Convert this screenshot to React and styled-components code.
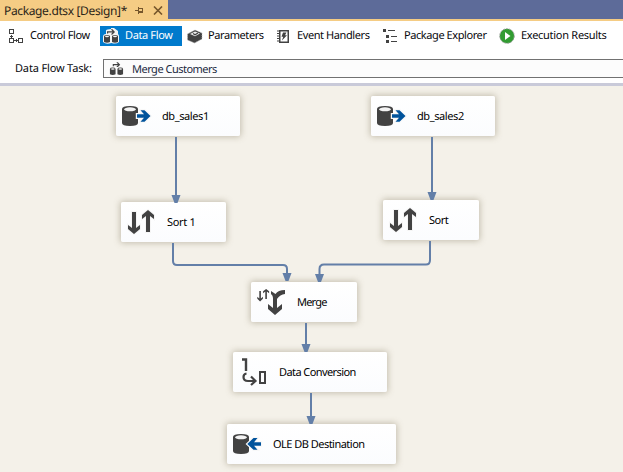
import React from "react";
import styled, { createGlobalStyle, css } from "styled-components";

const GlobalStyle = createGlobalStyle`
  * { box-sizing: border-box; }
  html, body { margin: 0; padding: 0; overflow: hidden; }
  body {
    font-family: "Noto Sans", "DejaVu Sans", sans-serif;
    font-size: 11px;
    color: #08080c;
    text-rendering: geometricPrecision;
  }
  svg { display: block; flex: none; }
`;

const Window = styled.div`
  width: 623px;
  height: 472px;
  display: flex;
  flex-direction: column;
  overflow: hidden;
  background: #f4f1e9;
`;

const TabStrip = styled.header`
  height: 21px;
  flex: none;
  display: flex;
  background: #5d6b99;
  border-bottom: 2px solid #f5cc84;
`;

const DocumentTab = styled.div`
  width: 168px;
  height: 21px;
  display: flex;
  align-items: center;
  padding: 0 0 0 4px;
  background: #f5cc84;
`;

const Label = styled.span`
  white-space: pre;
  line-height: 16px;
  letter-spacing: ${(p) => p.$track || 0}px;
`;

const LowLabel = styled(Label)`
  padding-top: 2px;
`;

const TabTitle = styled(Label)`
  width: 131px;
  flex: none;
  font-size: 12px;
  color: #2b2418;
`;

const TabActions = styled.div`
  display: flex;
  align-items: center;
  gap: 9px;
`;

const Toolbar = styled.nav`
  height: 31px;
  flex: none;
  display: flex;
  padding-top: 5px;
  background: #fff;
`;

const ToolItem = styled.div`
  width: ${(p) => p.$width}px;
  height: 20px;
  flex: none;
  display: flex;
  align-items: center;
  ${(p) =>
    p.$active &&
    css`
      background: #007acc;
      color: #fff;
    `}
`;

const IconSlot = styled.div`
  width: ${(p) => p.$width}px;
  padding-left: ${(p) => p.$inset}px;
  flex: none;
`;

const TaskRow = styled.div`
  height: 31px;
  flex: none;
  display: flex;
  align-items: flex-start;
  padding-top: 7px;
  background: #fff;
`;

const TaskCaption = styled(Label)`
  width: 103px;
  padding: 2px 0 0 15px;
`;

const TaskSelect = styled.div`
  flex: 1;
  height: 19px;
  display: flex;
  align-items: center;
  background: #fcfcfc;
  border: 1px solid #717171;
  border-right: 0;
  color: #1b293e;
`;

const Divider = styled.div`
  height: 3px;
  flex: none;
  background: #c9cad9;
`;

const Canvas = styled.main`
  position: relative;
  flex: 1;
  background: #f4f1e9;
`;

const Links = styled.svg`
  position: absolute;
  left: 0;
  top: 0;
`;

const Node = styled.div`
  position: absolute;
  left: ${(p) => p.$x}px;
  top: ${(p) => p.$y}px;
  width: ${(p) => p.$width}px;
  height: 40px;
  display: flex;
  align-items: center;
  border-radius: 2px;
  background: linear-gradient(#ffffff, #fbfcfe);
  box-shadow: 0 0 6px 1px rgba(110, 100, 70, 0.36);
  color: #000;
`;

const NodeArt = styled.svg`
  width: 46px;
  height: 40px;
`;

const ink = "#424242";

const PinIcon = () => (
  <svg width="9" height="8" viewBox="0 0 9 8" shapeRendering="crispEdges">
    <path d="M0 3h3v1H0zM3 0h1v7H3zM4 1h4v1H4zM4 4h4v2H4zM7 1h1v5H7z" fill="#75552b" />
  </svg>
);

const CloseIcon = () => (
  <svg width="10" height="9" viewBox="0 0 10 9">
    <path d="M1 .5l8 8M9 .5l-8 8" stroke="#75552b" strokeWidth="1.6" />
  </svg>
);

const ControlFlowIcon = () => (
  <svg width="15" height="15" viewBox="0 0 15 15" shapeRendering="crispEdges">
    <path
      d="M.5 .5h4v4h-4zM.5 9.5h4v4h-4zM9.500 9.500h4v4h-4zM2.500 6v3M1 7.500h3M5 11.500h4M7.500 10v3"
      fill="none"
      stroke={ink}
    />
  </svg>
);

const DataFlowIcon = ({ size = 16, light }) => (
  <svg width={size} height={size} viewBox="0 0 16 16">
    {light && (
      <path
        d="M0 9q0-3 3-3V2.500Q4 1 8 1V0h3l4 3v3q1 1 1 2v6q-3 2.500-7.500 1Q3 17 0 14z"
        fill="#f4f4f4"
      />
    )}
    <g fill={ink}>
      <path d="M1 8.500q0-1.500 3-1.500t3 1.500V14q-3 1.600-6 0zM9 8.500Q9 7 12 7t3 1.500V14q-3 1.600-6 0z" />
      <path d="M4 5.500V3.300h5.500L7.800 1.300h1.700L12 4 9.500 6.500H7.800L9.500 4.500H5.200v1z" />
    </g>
    <g fill="#f5f5f5">
      <ellipse cx="4" cy="8.500" rx="2" ry=".8" />
      <ellipse cx="12" cy="8.500" rx="2" ry=".8" />
    </g>
  </svg>
);

const ParametersIcon = () => (
  <svg width="16" height="15" viewBox="0 0 16 15">
    <path
      d="M.5 5L8 1l7 3v6l-7.500 4L.5 11z"
      fill={ink}
      stroke="#bdbdbd"
      strokeWidth=".8"
      strokeDasharray="1 1"
    />
    <path d="M3 5l5-2.600L13 4.500 8 7.300z" fill="#eee" />
    <path d="M6 4.500l2 1.200L11 4" stroke={ink} strokeWidth="1.300" fill="none" />
  </svg>
);

const EventIcon = () => (
  <svg width="12" height="13" viewBox="0 0 12 13">
    <path d="M2.750.75h8.500v11.500h-8.500z" fill="#fff" stroke={ink} strokeWidth="1.500" />
    <path d="M0 1h3M0 3.500h3M0 6h3M0 8.500h3M0 11h3" stroke={ink} strokeWidth="1.200" />
    <path d="M6 2.500h3.500L8 5.200h2L5 10.500l1.200-3.800H4.500z" fill={ink} />
  </svg>
);

const ExplorerIcon = () => (
  <svg width="14" height="14" viewBox="0 0 14 14" shapeRendering="crispEdges">
    <path d="M0 0h3v3H0zM3 6h3v3H3zM3 11h3v3H3zM5 1h7v1H5zM8 7h6v1H8zM8 12h6v1H8z" fill={ink} />
  </svg>
);

const RunIcon = () => (
  <svg width="16" height="16" viewBox="0 0 16 16">
    <circle cx="8" cy="8" r="7.300" fill="#319c31" stroke="#a3a3a3" strokeWidth="1" strokeDasharray="2 1" />
    <path d="M6 4l5.500 4L6 12z" fill="#fff" />
  </svg>
);

const Cylinder = () => (
  <>
    <path d="M6 13q0-3 8-3t8 3v14q0 3-8 3t-8-3z" fill={ink} />
    <ellipse cx="14" cy="13.300" rx="6" ry="2" fill="#f3f3f3" />
  </>
);

const SourceArt = () => (
  <NodeArt viewBox="0 0 46 40">
    <Cylinder />
    <path
      d="M21 18.300h7l-3.500-4h4L34.500 20l-6 5.700h-4l3.500-4h-7z"
      fill="#00539c"
      stroke="#f8f8f8"
      strokeWidth="2.400"
      paintOrder="stroke"
    />
  </NodeArt>
);

const DestinationArt = () => (
  <NodeArt viewBox="0 0 46 40">
    <Cylinder />
    <path
      d="M34 18.300h-7l3.500-4.200h-4L20.300 20l6.200 5.800h4L27 21.700h7z"
      fill="#00539c"
      stroke="#f8f8f8"
      strokeWidth="2.400"
      paintOrder="stroke"
    />
  </NodeArt>
);

const SortArt = () => (
  <NodeArt viewBox="0 0 46 40">
    <path
      d="M11 10h4v16l4-3v4l-6 5-6-5v-4l4 3zM25 30h4V14l4 3v-4l-6-5-6 5v4l4-3z"
      fill={ink}
      stroke="#f5f5f5"
      strokeWidth="2"
      paintOrder="stroke"
    />
  </NodeArt>
);

const MergeArt = () => (
  <NodeArt viewBox="0 0 46 40">
    <g fill={ink}>
      <path d="M8.300 9h1.600v7.500l2-1.700v2l-2.800 2.600-2.800-2.600v-2l2 1.700z" />
      <path d="M14.300 17h1.600V9.500l2.200 1.700v-2L15.100 7l-3 2.200v2l2.200-1.700z" />
      <path d="M20 9l4.500 3Q27 8 34 8v4q-5 .5-8 5v9l5-4v5l-7 6-7-6v-5l5 4V16q0-2.500-2-4z" />
    </g>
  </NodeArt>
);

const ConversionArt = () => (
  <NodeArt viewBox="0 0 46 40">
    <path d="M9 7.500h4V19" fill="none" stroke={ink} strokeWidth="2.400" />
    <path d="M13.500 21.500q-3 .5-3 3.500 0 4 4.500 4h6M18 24.500l4.500 4.500-4.500 4" fill="none" stroke={ink} strokeWidth="2.200" />
    <path d="M27 20h5v11h-5z" fill="none" stroke={ink} strokeWidth="2" />
  </NodeArt>
);

const tools = [
  { label: "Control Flow", icon: <ControlFlowIcon />, width: 100, slot: 30, inset: 9, track: -0.42 },
  { label: "Data Flow", icon: <DataFlowIcon light />, width: 82, slot: 25, inset: 3, track: -0.37, active: true },
  { label: "Parameters", icon: <ParametersIcon />, width: 89, slot: 26, inset: 5, track: -0.41 },
  { label: "Event Handlers", icon: <EventIcon />, width: 107, slot: 26, inset: 6, track: -0.41 },
  { label: "Package Explorer", icon: <ExplorerIcon />, width: 118, slot: 26, inset: 5, track: -0.42 },
  { label: "Execution Results", icon: <RunIcon />, width: 124, slot: 25, inset: 3, track: -0.28 },
];

const nodes = [
  { label: "db_sales1", x: 116, y: 10, width: 124, art: <SourceArt />, track: -0.4 },
  { label: "db_sales2", x: 371, y: 10, width: 124, art: <SourceArt />, track: -0.4 },
  { label: "Sort 1", x: 121, y: 116, width: 105, art: <SortArt />, track: -0.3 },
  { label: "Sort", x: 383, y: 114, width: 96, art: <SortArt />, track: -0.5 },
  { label: "Merge", x: 251, y: 196, width: 106, art: <MergeArt />, track: -0.8 },
  { label: "Data Conversion", x: 233, y: 266, width: 154, art: <ConversionArt />, track: -0.58 },
  { label: "OLE DB Destination", x: 227, y: 338, width: 169, art: <DestinationArt />, track: -0.52 },
];

const links = [
  { d: "M176 51V110", x: 176, tip: 117 },
  { d: "M432 51V108", x: 432, tip: 114 },
  { d: "M173 157V175Q173 179 177 179H283Q287 179 287 183V190", x: 287, tip: 195 },
  { d: "M430 155V174Q430 178.500 426 178.500H324Q319.500 178.500 319.500 183V190", x: 319.5, tip: 196 },
  { d: "M306 237V260", x: 306, tip: 266 },
  { d: "M311 307V332", x: 311, tip: 338 },
];

export default function App() {
  return (
    <Window>
      <GlobalStyle />
      <TabStrip>
        <DocumentTab>
          <TabTitle $track={-0.36}>Package.dtsx [Design]*</TabTitle>
          <TabActions>
            <PinIcon />
            <CloseIcon />
          </TabActions>
        </DocumentTab>
      </TabStrip>
      <Toolbar>
        {tools.map((t) => (
          <ToolItem key={t.label} $width={t.width} $active={t.active}>
            <IconSlot $width={t.slot} $inset={t.inset}>{t.icon}</IconSlot>
            <Label $track={t.track}>{t.label}</Label>
          </ToolItem>
        ))}
      </Toolbar>
      <TaskRow>
        <TaskCaption $track={-0.16}>Data Flow Task:</TaskCaption>
        <TaskSelect>
          <IconSlot $width={28} $inset={5}>
            <DataFlowIcon size={15} />
          </IconSlot>
          <LowLabel $track={-0.5}>Merge Customers</LowLabel>
        </TaskSelect>
      </TaskRow>
      <Divider />
      <Canvas>
        {nodes.map((n) => (
          <Node key={n.label} $x={n.x} $y={n.y} $width={n.width}>
            {n.art}
            <LowLabel $track={n.track}>{n.label}</LowLabel>
          </Node>
        ))}
        <Links width="623" height="386">
          {links.map((l) => (
            <g key={l.d}>
              <path d={l.d} fill="none" stroke="#637fa8" strokeWidth="2" />
              <path d={`M${l.x - 4.5} ${l.tip - 8}h9l-3 8h-3z`} fill="#637fa8" />
            </g>
          ))}
        </Links>
      </Canvas>
    </Window>
  );
}
